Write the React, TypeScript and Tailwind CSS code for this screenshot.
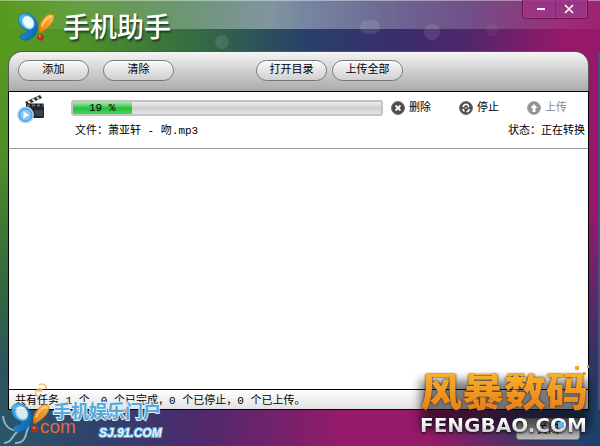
import { useState } from "react";
import type { ReactNode } from "react";

type Task = {
  id: number;
  file: string;
  percent: number;
  status: string;
};

const tasks: Task[] = [
  { id: 1, file: "萧亚轩 - 吻.mp3", percent: 19, status: "正在转换" },
];

function Logo({ className }: { className: string }) {
  return (
    <svg viewBox="0 0 38 30" className={className} aria-hidden="true">
      <defs>
        <linearGradient id="wing" x1="0" y1="0" x2="1" y2="1">
          <stop offset="0" stopColor="#5cc4f4" />
          <stop offset="0.5" stopColor="#1c86cf" />
          <stop offset="1" stopColor="#0a5aa6" />
        </linearGradient>
        <linearGradient id="petal" x1="1" y1="0" x2="0" y2="1">
          <stop offset="0" stopColor="#ffc04a" />
          <stop offset="1" stopColor="#ee7a0c" />
        </linearGradient>
      </defs>
      <path
        d="M1.500 7C1.500 2 7 0 12 2C18 4.500 21.500 11 20.500 17C19.500 24 13 29 6.500 28C3.500 27.500 2.500 24.500 4.500 22.500C6 21 10 22 11.500 18.500C5.500 18 1.500 13 1.500 7Z"
        fill="url(#wing)"
        stroke="#0f5f9f"
        strokeWidth="0.7"
      />
      <ellipse cx="11" cy="10.500" rx="5.800" ry="7.300" fill="#8fd6f8" transform="rotate(-35 11 10.500)" />
      <ellipse cx="11.300" cy="10" rx="4.800" ry="6.300" fill="#eefaff" transform="rotate(-35 11.300 10)" />
      <path d="M23 20.500C20.500 15 24 8 29 4C32.500 1.500 37 1.500 37 5.500C37 11 29 18 23 20.500Z" fill="url(#petal)" stroke="#d9780f" strokeWidth="0.7" />
      <path d="M25 14C26.500 10 30 5.500 34 4.500" fill="none" stroke="#ffdb86" strokeWidth="1.400" strokeLinecap="round" />
      <circle cx="23.500" cy="25.500" r="3.200" fill="#b83116" />
      <circle cx="22.800" cy="24.300" r="1.100" fill="#f0925e" />
    </svg>
  );
}

function ClapperIcon() {
  return (
    <svg viewBox="0 0 28 30" className="h-[30px] w-7" aria-hidden="true">
      <path d="M8 7L23 0L25 3L10 10Z" fill="#333" />
      <path d="M11 6L13.500 8.500M15.500 4L18 6.500M20 2L22 4.500" stroke="#eee" strokeWidth="1.800" />
      <rect x="9" y="8.500" width="18" height="14.500" rx="1" fill="#20252b" />
      <path d="M10 10.500H27" stroke="#66717b" strokeWidth="2" strokeDasharray="3 2" />
      <path d="M17 15H26V21H19Z" fill="#3c4248" />
      <circle cx="8.500" cy="20" r="7.800" fill="#5aa9e6" stroke="#bcdcf2" strokeWidth="1.200" />
      <circle cx="8.500" cy="20" r="5.200" fill="#8cc8f2" />
      <path d="M6.500 16.500L12 20L6.500 23.500Z" fill="#fff" />
    </svg>
  );
}

function RoundIcon({ children }: { children: ReactNode }) {
  return (
    <svg viewBox="0 0 14 14" className="size-3.5" aria-hidden="true">
      <circle cx="7" cy="7" r="6.500" fill="#4b4b4b" stroke="#777" />
      {children}
    </svg>
  );
}

function PillButton({ children }: { children: ReactNode }) {
  return (
    <button className="flex h-[21px] w-[71px] items-center justify-center rounded-full border border-[#777] bg-linear-to-b from-[#fafafa] to-[#cfcfcf] pb-px shadow-[inset_0_1px_1px_#fff]">
      {children}
    </button>
  );
}

function TaskRow({ task, onRemove }: { task: Task; onRemove: () => void }) {
  return (
    <li className="flex h-[57px] border-b border-[#999] pt-[3px] pr-[3px] pl-2">
      <ClapperIcon />
      <div className="ml-[26px] flex min-w-0 flex-1 flex-col">
        <div className="flex h-[26px] items-center">
          <div
            role="progressbar"
            aria-label={task.file}
            aria-valuenow={task.percent}
            className="relative h-4 flex-1 rounded-[3px] border-2 border-[#c3c3c3] bg-linear-to-b from-[#eee] via-[#cecece] to-[#e5e5e5]"
          >
            <div
              className="h-full bg-linear-to-b from-[#a3edab] via-[#24bd3d] to-[#3fdc55]"
              style={{ width: `${task.percent}%` }}
            />
            <span className="absolute top-1/2 left-4 -translate-y-1/2 leading-3">{task.percent} %</span>
          </div>
          <div className="ml-2 flex gap-7">
            <button className="flex items-center gap-1" onClick={onRemove}>
              <RoundIcon>
                <path d="M4.500 4.500L9.500 9.500M9.500 4.500L4.500 9.500" stroke="#fff" strokeWidth="1.800" />
              </RoundIcon>
              删除
            </button>
            <button className="flex items-center gap-1">
              <RoundIcon>
                <path d="M4 6L5.500 3.500H8.500L10 6M10.500 8L9 10.500H7.500M5.500 10.500L3.500 8" fill="none" stroke="#fff" strokeWidth="1.600" />
                <path d="M5.500 7H8.500" stroke="#ddd" />
              </RoundIcon>
              停止
            </button>
            <button className="mr-[18px] flex items-center gap-1 text-[#888]" disabled>
              <span className="opacity-60">
                <RoundIcon>
                  <path d="M7 3L10.500 7H8.500V11H5.500V7H3.500Z" fill="#fff" />
                </RoundIcon>
              </span>
              上传
            </button>
          </div>
        </div>
        <div className="flex items-center justify-between pt-0.5 pl-1">
          <span>文件：{task.file}</span>
          <span>状态：{task.status}</span>
        </div>
      </div>
    </li>
  );
}

function TitleBar() {
  return (
    <header className="relative flex h-[51px] justify-between overflow-hidden bg-[linear-gradient(90deg,#58991f_0%,#519426_12%,#346b43_33%,#28406b_51%,#3b2c6c_67%,#4f276b_78%,#96186a_94%,#96186a_100%)]">
      <div className="absolute inset-x-0 top-0 h-[29px] border-t border-white/40 bg-linear-to-r from-white/0 via-white/40 via-45% to-white/5" />
      <span className="absolute top-[35px] left-[215px] size-3.5 rounded-full bg-white/10" />
      <span className="absolute top-5 left-[360px] h-3.5 w-5 rounded-full bg-white/10" />
      <span className="absolute top-6 left-[424px] size-4 rounded-full bg-white/10" />
      <span className="absolute top-6 left-[486px] size-3 rounded-full bg-white/5" />
      <div className="relative flex items-start gap-2 pl-[17px]">
        <Logo className="mt-3 h-[30px] w-[38px]" />
        <h1 className="mt-3 text-[27px] leading-9 font-medium text-white [text-shadow:1px_2px_2px_#163b22]">手机助手</h1>
      </div>
      <div className="relative mr-3 flex h-[19px] w-[66px] rounded-b-sm border border-t-0 border-[#701552] bg-[#9a3585] shadow-[inset_0_0_1px_#d892cc]">
        <button aria-label="最小化" className="flex flex-1 items-center justify-center border-r border-[#86246f] pl-1">
          <svg viewBox="0 0 10 10" className="size-2.5">
            <path d="M1 5H9" stroke="#fff" strokeWidth="2" />
          </svg>
        </button>
        <button aria-label="关闭窗口" className="flex flex-1 items-center justify-center pr-1">
          <svg viewBox="0 0 10 10" className="size-2.5">
            <path d="M1 1L9 9M9 1L1 9" stroke="#fff" strokeWidth="1.600" />
          </svg>
        </button>
      </div>
    </header>
  );
}

function PortalMark() {
  return (
    <div className="pointer-events-none absolute bottom-0 left-0 h-[64px] w-[170px]">
      <svg viewBox="0 0 60 64" className="absolute top-0 left-0 h-16 w-[60px] opacity-80" aria-hidden="true">
        <path d="M3 34C4 44 9 48 18 49C11 54 13 60 4 61M15 61C27 61 25 52 29 43" fill="none" stroke="#a0d4e8" strokeWidth="2" />
        <path d="M38 15C34 12 35 8 39 8M39 3C43 1 47 3 46 7" fill="none" stroke="#efbc67" strokeWidth="1.800" />
        <circle cx="40" cy="8" r="2.500" fill="#efbc67" />
      </svg>
      <Logo className="absolute top-[19px] left-2.5 h-[34px] w-10 opacity-90" />
      <span className="absolute top-[35px] left-[40px] font-['Liberation_Sans',sans-serif] text-[19px] leading-5 text-[#e06b3e]">com</span>
      <span className="absolute top-[19px] left-[53px] text-[18px] leading-6 font-bold whitespace-nowrap text-[#5ba7d5] [paint-order:stroke_fill] [-webkit-text-stroke:2px_#ddf1fa]">
        手机娱乐门户
      </span>
      <span className="absolute top-[43px] left-[99px] font-['Liberation_Sans',sans-serif] text-[12px] leading-4 font-bold whitespace-nowrap text-[#e5f5ff] italic [paint-order:stroke_fill] [-webkit-text-stroke:2px_#5b9fd0]">
        SJ.91.COM
      </span>
    </div>
  );
}

function FengbaoMark() {
  return (
    <div className="pointer-events-none absolute right-2.5 bottom-3 flex w-[170px] flex-col">
      <div className="absolute inset-x-0 top-4 bottom-1 bg-black/50 blur-[5px]" />
      <svg viewBox="0 0 16 14" className="relative -mb-1 h-3.5 w-4 self-end" aria-hidden="true">
        <path d="M1 2H5V6H1ZM9 8H12V11H9Z" fill="#f4a62b" />
        <path d="M13 1H15V4H13Z" fill="#d9ad62" />
      </svg>
      <span className="relative bg-linear-to-b from-[#f8b02c] to-[#e57516] bg-clip-text text-[42px] leading-[42px] font-black whitespace-nowrap text-transparent drop-shadow-[0_0_1px_#2a1908]">
        风暴数码
      </span>
      <span className="relative bg-linear-to-b from-white from-30% to-[#c5c5cc] bg-clip-text font-['DejaVu_Sans',sans-serif] text-[20px] leading-[18px] font-bold whitespace-nowrap text-transparent drop-shadow-[0_1px_1px_#111]">
        FENGBAO.COM
      </span>
      <span className="absolute right-[26px] bottom-1.5 size-1.5 bg-[#58b8ee]" />
    </div>
  );
}

export default function App() {
  const [list, setList] = useState(tasks);

  return (
    <div className="relative flex min-h-screen flex-col overflow-hidden bg-[#2c5068] font-['Liberation_Mono','Noto_Sans_CJK_SC',monospace] text-[11px] leading-4 text-black">
      <TitleBar />
      <div className="flex flex-1 bg-[linear-gradient(180deg,#58991f_0%,#4c8d28_30%,#35673f_65%,#2b5360_90%)]">
        <div className="w-2 shrink-0" />
        <main className="flex min-w-0 flex-1 flex-col bg-[linear-gradient(90deg,#58991f_50%,#96186a_50%)]">
          <div className="flex h-10 items-start rounded-t-[14px] border border-b-0 border-[#555] bg-linear-to-b from-[#f5f5f5] to-[#aaa] px-[9px] pt-2">
            <div className="flex gap-3.5">
              <PillButton>添加</PillButton>
              <PillButton>清除</PillButton>
            </div>
            <div className="ml-[82px] flex gap-[5px]">
              <PillButton>打开目录</PillButton>
              <PillButton>上传全部</PillButton>
            </div>
          </div>
          <ul className="flex-1 border border-black bg-white">
            {list.map((task) => (
              <TaskRow
                key={task.id}
                task={task}
                onRemove={() => setList(list.filter((t) => t.id !== task.id))}
              />
            ))}
          </ul>
          <div className="flex h-5 items-center border border-t-0 border-black bg-linear-to-b from-white to-[#e2e2e2] px-1.5 pt-0.5">
            共有任务 1 个，0 个已完成，0 个已停止，0 个已上传。
          </div>
        </main>
        <div className="w-[11px] shrink-0 border-r-2 border-[#455080] bg-[linear-gradient(180deg,#96186a_0%,#96186a_45%,#343366_85%,#1c4168_100%)]" />
      </div>
      <footer className="flex h-9 items-start justify-end bg-[linear-gradient(90deg,#2c5666_0%,#30416c_17%,#4b2a6c_32%,#961a6a_58%,#961a6a_72%,#423467_88%,#1b426b_100%)] pt-2 pr-5">
        <button className="h-[22px] w-16 rounded-[3px] border border-[#777] bg-linear-to-b from-[#999] to-[#bbb] pt-0.5">关闭</button>
      </footer>
      <PortalMark />
      <FengbaoMark />
    </div>
  );
}
